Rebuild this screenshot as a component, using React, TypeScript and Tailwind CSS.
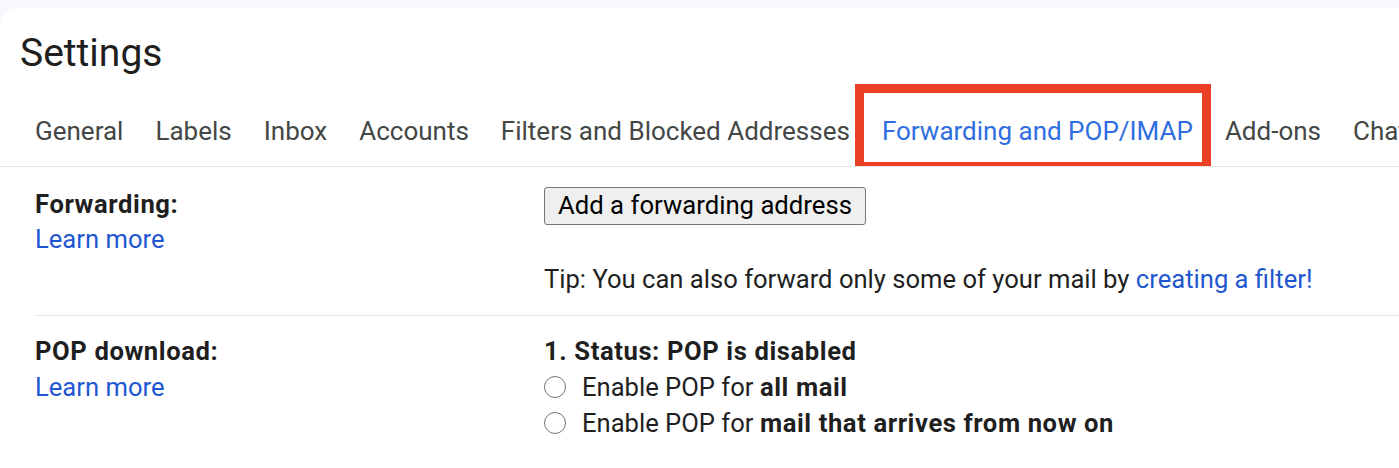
const tabs = [
  "General",
  "Labels",
  "Inbox",
  "Accounts",
  "Filters and Blocked Addresses",
  "Forwarding and POP/IMAP",
  "Add-ons",
  "Chat and Meet",
];

function Radio({ children }: { children: React.ReactNode }) {
  return (
    <label className="flex items-center gap-4 h-9">
      <span className="w-[22px] h-[22px] rounded-full border-[1.5px] border-[#767676] bg-white shrink-0"></span>
      <span>{children}</span>
    </label>
  );
}

export default function App() {
  return (
    <div
      className="min-h-screen bg-[#f6f8fc] pt-2 overflow-hidden"
      style={{ fontFamily: "Roboto, 'Liberation Sans', sans-serif" }}
    >
      <div className="bg-white rounded-tl-[18px] min-h-[460px] text-[25.6px] leading-9 text-[#1f1f1f]">
        {/* Title */}
        <h1 className="pl-5 pt-[21px] text-[39px] leading-[48px] text-[#1f1f1f]">Settings</h1>

        {/* Tabs */}
        <nav className="flex pl-[19px] border-b border-[#e3e3e3] whitespace-nowrap overflow-hidden">
          {tabs.map((t) => {
            const active = t === "Forwarding and POP/IMAP";
            return (
              <div
                key={t}
                className={`relative px-[16px] pt-[36px] pb-[17px] text-[26px] leading-9 ${
                  active ? "text-[#2f6ee0]" : "text-[#444746]"
                }`}
              >
                {t}
                {active && (
                  <span className="absolute top-[7px] -bottom-[5px] -left-[11px] -right-[2px] border-[9px] border-[#eb4026]"></span>
                )}
              </div>
            );
          })}
        </nav>

        {/* Forwarding */}
        <div className="flex pl-[35px] pt-[19px] pb-[18px]">
          <div className="w-[509px] shrink-0">
            <div className="font-bold tracking-[0.6px]">Forwarding:</div>
            <a className="text-[#1f57d1] block -mt-px">Learn more</a>
          </div>
          <div>
            <button className="mt-px h-[38px] px-[13px] bg-[#efefef] border border-[#767676] rounded-[3px] text-[25.7px] leading-none text-black">
              Add a forwarding address
            </button>
            <div className="mt-[36px]">
              Tip: You can also forward only some of your mail by{" "}
              <a className="text-[#1f57d1]">creating a filter!</a>
            </div>
          </div>
        </div>

        {/* POP download */}
        <div className="ml-[35px] border-t border-[#e3e3e3] flex pt-[17px]">
          <div className="w-[509px] shrink-0">
            <div className="font-bold tracking-[0.6px]">POP download:</div>
            <a className="text-[#1f57d1] block">Learn more</a>
          </div>
          <div>
            <div className="font-bold tracking-[0.6px]">1. Status: POP is disabled</div>
            <Radio>
              Enable POP for <b className="tracking-[0.6px]">all mail</b>
            </Radio>
            <Radio>
              Enable POP for <b className="tracking-[0.6px]">mail that arrives from now on</b>
            </Radio>
          </div>
        </div>
      </div>
    </div>
  );
}
